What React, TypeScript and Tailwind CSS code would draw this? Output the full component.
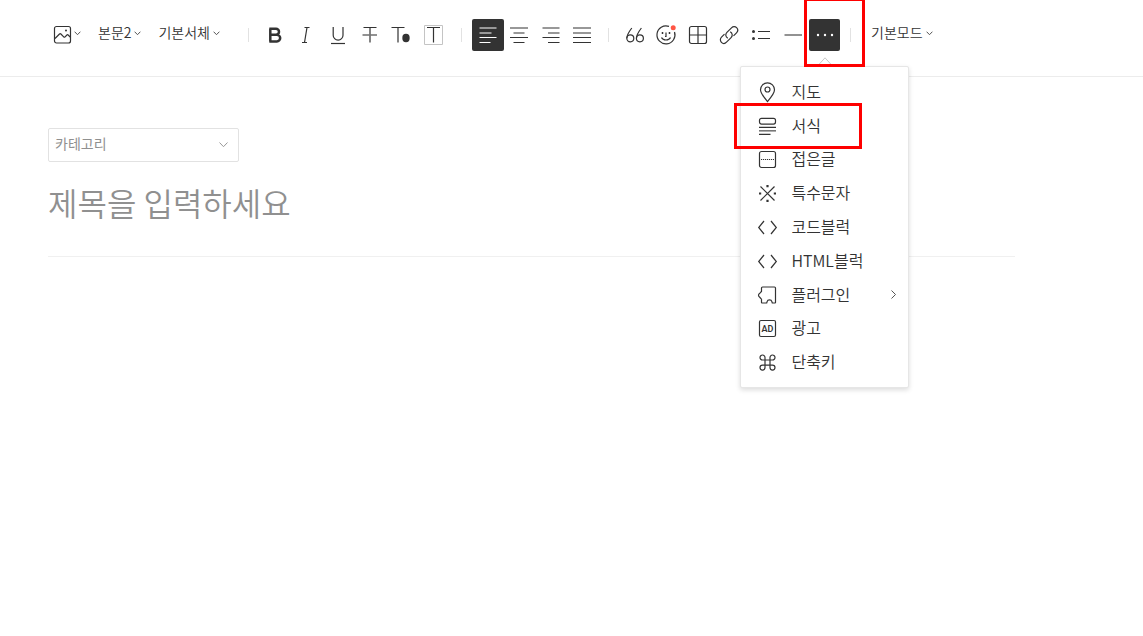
import React, { useState } from "react";

function Icon({ children }: { children: React.ReactNode }) {
  return (
    <svg
      width="24"
      height="24"
      viewBox="0 0 24 24"
      fill="none"
      stroke="currentColor"
      strokeWidth="1.2"
      aria-hidden="true"
      className="shrink-0"
    >
      {children}
    </svg>
  );
}

function Chevron() {
  return (
    <svg width="7" height="7" viewBox="0 0 7 7" fill="none" stroke="#555" strokeWidth="1" aria-hidden="true">
      <path d="M.6 2.700 3.500 5.700 6.400 2.700" />
    </svg>
  );
}

function Separator() {
  return <span className="h-3.5 w-px shrink-0 bg-[#e2e2e2]" />;
}

type Tool = { label: string; icon: React.ReactNode };

const formatTools: Tool[] = [
  {
    label: "굵게",
    icon: (
      <path
        d="M7.300 5.800v12.600M6.300 5.800h6.700a3 3 0 0 1 0 6H7.400M13 11.800h.9a3.300 3.300 0 0 1 0 6.600H6.300"
        strokeWidth="2.5"
      />
    ),
  },
  { label: "기울임", icon: <path d="M10.500 4.500h5M8 19.500h5M13 4.500l-2.500 15" /> },
  {
    label: "밑줄",
    icon: (
      <>
        <path d="M7.200 4v8.200a4.900 4.900 0 0 0 9.800 0V4" />
        <path d="M5 20.500h14" />
      </>
    ),
  },
  {
    label: "취소선",
    icon: (
      <>
        <path d="M5.500 4.500h13M12 4.500v15" />
        <path d="M4.500 12h14.500" stroke="#777" strokeWidth="1.600" />
      </>
    ),
  },
  {
    label: "글자색",
    icon: (
      <>
        <path d="M2.500 4.500h13M9 4.500v15" />
        <ellipse cx="17" cy="15" rx="3.700" ry="4.200" fill="currentColor" stroke="none" />
      </>
    ),
  },
  {
    label: "배경색",
    icon: (
      <>
        <path d="M3.500 2.500h18v19h-18z" stroke="#c4c4c4" strokeWidth="1" />
        <path d="M6 4.500h13M12.500 4.500v15" />
      </>
    ),
  },
];

const alignTools: Tool[] = [
  { label: "왼쪽 정렬", icon: <path d="M3.500 5h17M3.500 10h12M3.500 14.500h17M3.500 19.500h11" /> },
  { label: "가운데 정렬", icon: <path d="M3 5h18M6.500 10h11M3 14.500h18M6.500 19.500h11" /> },
  { label: "오른쪽 정렬", icon: <path d="M3.500 5h17M9 10h11.500M3.500 14.500h17M9 19.500h11.500" /> },
  { label: "양쪽 정렬", icon: <path d="M3 5h18M3 10h18M3 14.500h18M3 19.500h18" /> },
];

const insertTools: Tool[] = [
  {
    label: "인용",
    icon: (
      <>
        <circle cx="7.300" cy="15.300" r="3.500" />
        <circle cx="16.900" cy="15.300" r="3.500" />
        <path d="M8.800 5C6.500 8 3.900 11.800 3.800 15.300M18.400 5C16.100 8 13.500 11.800 13.400 15.300" />
      </>
    ),
  },
  {
    label: "이모티콘",
    icon: (
      <>
        <path d="M15 3.400A9 9 0 1 0 20.500 9" />
        <path d="M7.500 14.500c1.500 3.300 7.500 3.300 9 0M12 9.500v4h-1" />
        <path d="M8.500 9v2M15.500 9v2" strokeWidth="1.500" />
        <circle cx="19.200" cy="4.700" r="2.500" fill="#ff5544" stroke="none" />
      </>
    ),
  },
  {
    label: "표",
    icon: (
      <>
        <rect x="3.500" y="3.500" width="17" height="17" rx="2" />
        <path d="M12 3.500v17M3.500 12h17" />
      </>
    ),
  },
  {
    label: "링크",
    icon: (
      <>
        <path d="M10.800 15.200c-2.300-1.300-2.700-4-.9-5.800l4.600-4.600c1.500-1.500 3.700-1.500 5.100-.1s1.400 3.600-.1 5.100l-3 3" />
        <path d="M13.200 8.800c2.300 1.300 2.700 4 .9 5.800l-4.600 4.600c-1.500 1.500-3.700 1.500-5.100.1s-1.400-3.600.1-5.100l3-3" />
      </>
    ),
  },
  {
    label: "목록",
    icon: (
      <>
        <path d="M9 8.500h12M9 15.500h12" />
        <circle cx="4.500" cy="8.500" r="1.500" fill="currentColor" stroke="none" />
        <circle cx="4.500" cy="15.500" r="1.500" fill="currentColor" stroke="none" />
      </>
    ),
  },
  { label: "구분선", icon: <path d="M3.500 12h17.500" stroke="#777" strokeWidth="1.600" /> },
];

const menuItems: Tool[] = [
  {
    label: "지도",
    icon: (
      <>
        <path d="M12.500 21.500C9.500 18 5.500 13.500 5.500 9.800a7 7 0 0 1 14 0c0 3.700-4 8.200-7 11.700Z" />
        <circle cx="12.500" cy="9.500" r="2.500" />
      </>
    ),
  },
  {
    label: "서식",
    icon: (
      <>
        <rect x="4.500" y="4.300" width="16" height="5.800" rx="2" />
        <path d="M4 13.300h17M4 20.300h11.500" />
        <path d="M4 16.800h17" stroke="#777" strokeWidth="1.600" />
      </>
    ),
  },
  {
    label: "접은글",
    icon: (
      <>
        <rect x="4.500" y="4.500" width="16" height="16" rx="2" />
        <path d="M6 12.500h13" strokeWidth="1" strokeDasharray="1.200 .8" />
      </>
    ),
  },
  {
    label: "특수문자",
    icon: (
      <>
        <path d="m5.500 5.500 14 14m0-14-14 14" />
        <path
          d="M11.400 4h2.200v2.200h-2.200zM11.400 18.800h2.200V21h-2.200zM4 11.400h2.200v2.200H4zM18.800 11.400H21v2.200h-2.200z"
          fill="currentColor"
          stroke="none"
        />
      </>
    ),
  },
  { label: "코드블럭", icon: <path d="m9 6-5.300 6.500L9 19m7-13 5.300 6.500L16 19" /> },
  { label: "HTML블럭", icon: <path d="m9 6-5.300 6.500L9 19m7-13 5.300 6.500L16 19" /> },
  {
    label: "플러그인",
    icon: (
      <path
        d="M6.500 5q0-1 1-1h12q1 0 1 1v14.500q0 .500-.500.500h-2.700l-.300-1.200a2.600 2.600 0 0 0-5 0l-.300 1.200H7q-.500 0-.500-.500v-3.400c-.800-.100-1-1.400-2-2.100-1.300-.900-1.300-2.500 0-3.400 1-.700 1.200-1.900 2-2Z"
        strokeLinejoin="round"
      />
    ),
  },
  {
    label: "광고",
    icon: (
      <>
        <rect x="4.500" y="4.500" width="16" height="16" rx="1.500" />
        <text
          x="12.500"
          y="15.700"
          textAnchor="middle"
          fontSize="9"
          fontWeight="600"
          fontFamily="Roboto, sans-serif"
          fill="currentColor"
          stroke="none"
        >
          AD
        </text>
      </>
    ),
  },
  {
    label: "단축키",
    icon: (
      <path d="M10 10V7.600A2.500 2.500 0 1 0 7.500 10h10A2.500 2.500 0 1 0 15 7.600v10a2.500 2.500 0 1 0 2.500-2.500h-10A2.500 2.500 0 1 0 10 17.600Z" />
    ),
  },
];

function ToolButton({ tool, active, onClick }: { tool: Tool; active?: boolean; onClick?: () => void }) {
  return (
    <button
      type="button"
      aria-label={tool.label}
      aria-pressed={active}
      onClick={onClick}
      className={
        active
          ? "flex h-8 items-center justify-center rounded-xs bg-[#333] text-white"
          : "flex h-8 items-center justify-center rounded-xs text-[#333]"
      }
    >
      <Icon>{tool.icon}</Icon>
    </button>
  );
}

function DropButton({ children }: { children: React.ReactNode }) {
  return (
    <button
      type="button"
      className="flex h-[26px] items-center gap-[3px] text-sm font-[350] whitespace-nowrap text-[#333]"
    >
      {children}
      <Chevron />
    </button>
  );
}

function MoreMenu() {
  return (
    <div className="absolute top-[47px] -left-[68px] z-10 w-[169px] rounded-xs border border-[#e6e6e6] bg-white py-2 shadow-[0_2px_5px_rgba(0,0,0,0.14)]">
      <svg width="14" height="10" viewBox="0 0 14 10" className="absolute -top-2.5 left-[77px]" aria-hidden="true">
        <path d="M0 8.500 7 .8 14 8.500V10H0Z" fill="#fff" />
        <path d="M0 8.500 7 .8 14 8.500" fill="none" stroke="#c8c8c8" />
      </svg>
      <ul className="grid h-[304px] grid-rows-9">
        {menuItems.map((item) => (
          <li key={item.label} className="flex">
            <button
              type="button"
              className="flex w-full items-center gap-3 pr-3 pl-3.5 text-base leading-none font-[350] text-[#333]"
            >
              <Icon>{item.icon}</Icon>
              <span className="pb-0.5">{item.label}</span>
              {item.label === "플러그인" && (
                <svg width="5" height="9" viewBox="0 0 5 9" fill="none" stroke="#555" className="ml-auto" aria-hidden="true">
                  <path d="m.5.5 4 4-4 4" />
                </svg>
              )}
            </button>
          </li>
        ))}
      </ul>
    </div>
  );
}

export default function App() {
  const [align, setAlign] = useState(0);
  const [open, setOpen] = useState(true);

  return (
    <div className="relative min-h-screen overflow-hidden bg-white font-['Noto_Sans_CJK_KR',sans-serif] text-[#333]">
      <header className="flex items-start border-b border-[#ececec] pt-[19px] pb-[25px] pl-[50px]">
        <div className="flex w-[198px] shrink-0 items-center gap-[17px]">
          <button type="button" aria-label="사진" className="flex h-[26px] items-center text-[#333]">
            <Icon>
              <rect x="4.500" y="6.500" width="16" height="16.500" rx="2" />
              <path d="m5 18.500 4.500-4.500q.700-.700 1.400 0l2.800 2.800q.700.700 1.400 0l1.800-1.800q.700-.700 1.300 0l2.300 2.300" />
              <circle cx="16" cy="10.500" r="1" fill="currentColor" stroke="none" />
            </Icon>
            <Chevron />
          </button>
          <DropButton>본문2</DropButton>
          <DropButton>기본서체</DropButton>
        </div>
        <div className="flex h-8 shrink-0 items-center">
          <Separator />
          <div className="ml-2.5 grid w-[190px] grid-cols-6">
            {formatTools.map((tool) => (
              <ToolButton key={tool.label} tool={tool} />
            ))}
          </div>
          <div className="flex pr-2.5 pl-3">
            <Separator />
          </div>
          <div className="grid w-[126px] grid-cols-4">
            {alignTools.map((tool, i) => (
              <ToolButton key={tool.label} tool={tool} active={align === i} onClick={() => setAlign(i)} />
            ))}
          </div>
          <div className="flex px-2.5">
            <Separator />
          </div>
          <div className="grid w-[221px] grid-cols-7">
            {insertTools.map((tool) => (
              <ToolButton key={tool.label} tool={tool} />
            ))}
            <div className="relative pl-px">
              <button
                type="button"
                aria-label="더보기"
                aria-expanded={open}
                onClick={() => setOpen(!open)}
                className="flex h-8 w-full items-center justify-center rounded-xs bg-[#333] text-white"
              >
                <svg width="18" height="4" viewBox="0 0 18 4" fill="currentColor" aria-hidden="true">
                  <circle cx="2" cy="2" r="1.200" />
                  <circle cx="9" cy="2" r="1.200" />
                  <circle cx="16" cy="2" r="1.200" />
                </svg>
              </button>
              {open && <MoreMenu />}
            </div>
          </div>
          <div className="flex pr-5 pl-2.5">
            <Separator />
          </div>
        </div>
        <DropButton>기본모드</DropButton>
      </header>

      <main className="mr-32 ml-12 pt-[51px]">
        <div className="relative w-[191px]">
          <select
            aria-label="카테고리"
            className="block h-[34px] w-full appearance-none rounded-xs border border-[#e2e2e2] bg-white px-1.5 pb-1 text-sm font-normal text-[#909090]"
          >
            <option>카테고리</option>
          </select>
          <svg
            width="9"
            height="6"
            viewBox="0 0 9 6"
            fill="none"
            stroke="#999"
            className="pointer-events-none absolute top-3.5 right-[11px]"
            aria-hidden="true"
          >
            <path d="M.5.5 4.500 4.700 8.500.5" />
          </svg>
        </div>
        <input
          aria-label="제목"
          placeholder="제목을 입력하세요"
          className="mt-4 block h-[79px] w-full border-b border-[#f0f0f0] pb-[30px] text-[32px] font-[350] text-[#333] outline-none placeholder:text-[#909090]"
        />
        <textarea aria-label="내용" className="block h-72 w-full resize-none outline-none" />
      </main>

      <div className="pointer-events-none absolute -top-0.5 left-[804px] z-20 h-[69px] w-[61px] border-3 border-[#fe0000]" />
      <div className="pointer-events-none absolute top-[103px] left-[734px] z-20 h-[46px] w-32 border-3 border-[#fe0000]" />
    </div>
  );
}
